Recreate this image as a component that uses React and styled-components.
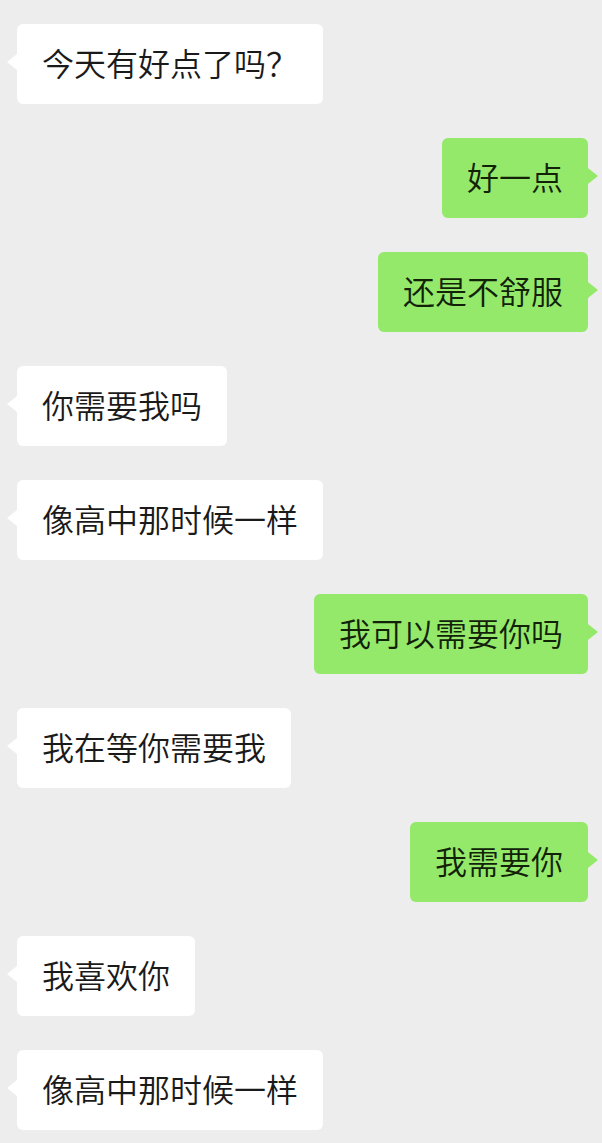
import React from 'react';
import styled, { createGlobalStyle } from 'styled-components';

const GlobalStyle = createGlobalStyle`
    html, body {
        margin: 0;
        padding: 0;
        background: #ededed;
    }
`;

const Chat = styled.div`
    display: flex;
    flex-direction: column;
    gap: 34px;
    padding: 24px 14px 13px 17px;
    min-height: 1143px;
    box-sizing: border-box;
    background: #ededed;
    font-family: "Noto Sans CJK SC", "Noto Sans", sans-serif;
`;

const Row = styled.div`
    display: flex;
    justify-content: ${props => props.mine ? 'flex-end' : 'flex-start'};
`;

const Bubble = styled.div`
    position: relative;
    height: 80px;
    padding: 0 25px 4px;
    box-sizing: border-box;
    display: flex;
    align-items: center;
    border-radius: 6px;
    background: ${props => props.mine ? '#95e96a' : '#ffffff'};
    color: ${props => props.mine ? '#112209' : '#1a1a1a'};
    font-size: 32px;
    font-weight: 350;
    white-space: nowrap;

    &::before {
        content: '';
        position: absolute;
        top: 30px;
        ${props => props.mine ? 'right: -10px;' : 'left: -10px;'}
        border-top: 8px solid transparent;
        border-bottom: 8px solid transparent;
        ${props => props.mine
            ? 'border-left: 10px solid #95e96a;'
            : 'border-right: 10px solid #ffffff;'}
    }
`;

const messages = [
    {text: '今天有好点了吗？', mine: false},
    {text: '好一点', mine: true},
    {text: '还是不舒服', mine: true},
    {text: '你需要我吗', mine: false},
    {text: '像高中那时候一样', mine: false},
    {text: '我可以需要你吗', mine: true},
    {text: '我在等你需要我', mine: false},
    {text: '我需要你', mine: true},
    {text: '我喜欢你', mine: false},
    {text: '像高中那时候一样', mine: false},
];

export default function App() {
    return (
        <>
            <GlobalStyle />
            <Chat>
                {messages.map((msg, index) => (
                    <Row key={index} mine={msg.mine}>
                        <Bubble mine={msg.mine}>{msg.text}</Bubble>
                    </Row>
                ))}
            </Chat>
        </>
    );
}
